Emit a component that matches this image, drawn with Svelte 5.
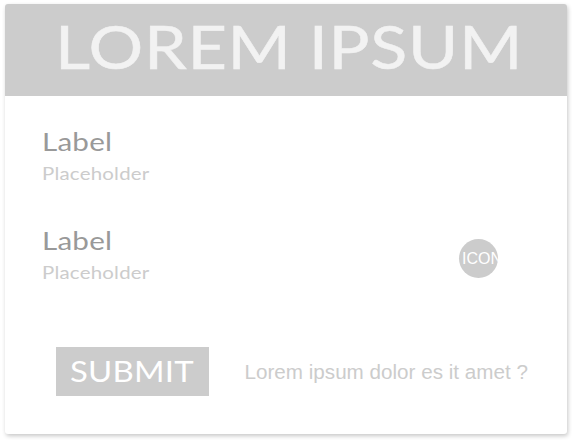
<script>
  const fields = ['Label', 'Label'];
</script>

<div class="page">
  <main class="card">
    <header><h1>LOREM IPSUM</h1></header>
    <section class="body">
      {#each fields as label, i}
        <div class="field">
          <div class="copy">
            <div class="label">{label}</div>
            <div class="placeholder">Placeholder</div>
          </div>
          {#if i === 1}
            <div class="icon"><span>ICON</span></div>
          {/if}
        </div>
      {/each}
      <footer>
        <button><span>SUBMIT</span></button>
        <a href="#help">Lorem ipsum dolor es it amet ?</a>
      </footer>
    </section>
  </main>
</div>

<style>
  :global(body) { background: #fff; }
  .page {
    box-sizing: border-box;
    width: 575px;
    height: 443px;
    padding: 4px 0 0 5px;
    overflow: hidden;
  }
  .card {
    width: 562px;
    height: 430px;
    border-radius: 3px;
    background: #fff;
    box-shadow: 1px 2px 4px rgba(0, 0, 0, 0.22);
    font-family: Lato, sans-serif;
    white-space: nowrap;
  }
  header {
    box-sizing: border-box;
    height: 92px;
    padding: 5px 0 0 50px;
    background: #ccc;
    border-radius: 3px 3px 0 0;
  }
  h1 {
    margin: 0;
    width: max-content;
    font-size: 60.5px;
    line-height: 73px;
    font-weight: 400;
    letter-spacing: 0.6px;
    word-spacing: -1px;
    color: #f2f2f2;
    -webkit-text-stroke: 0.5px #f2f2f2;
    transform: scaleX(1.13);
    transform-origin: left;
  }
  .body { padding: 30px 38px 0 37px; }
  .field {
    height: 99px;
    display: flex;
    justify-content: space-between;
  }
  .copy { width: 130px; }
  .label {
    width: max-content;
    font-size: 25.5px;
    line-height: 31px;
    letter-spacing: 0.2px;
    color: #999;
    transform: scaleX(1.16);
    transform-origin: left;
  }
  .placeholder {
    width: max-content;
    margin-top: 5px;
    font-size: 18px;
    line-height: 22px;
    letter-spacing: 0.2px;
    color: #ccc;
    transform: scaleX(1.135);
    transform-origin: left;
  }
  .icon {
    box-sizing: border-box;
    width: 39px;
    height: 39px;
    margin: 14px 31px 0 0;
    padding-left: 3px;
    border-radius: 50%;
    overflow: hidden;
    background: #ccc;
    color: #fff;
    font: 16px/39px "Liberation Sans", sans-serif;
  }
  footer {
    display: flex;
    align-items: center;
    margin: 23px 0 0 14px;
  }
  button {
    flex: none;
    width: 153px;
    height: 49px;
    padding: 0 0 1px 14px;
    border: 0;
    background: #ccc;
    color: #fff;
    text-align: left;
    font: 29.5px/46px Lato, sans-serif;
  }
  button span {
    display: inline-block;
    letter-spacing: 0.2px;
    transform: scaleX(1.115);
    transform-origin: left;
  }
  a {
    flex: none;
    margin-left: 35.5px;
    color: #ccc;
    font: 20.65px/24px "Liberation Sans", sans-serif;
    text-decoration: none;
  }
</style>
